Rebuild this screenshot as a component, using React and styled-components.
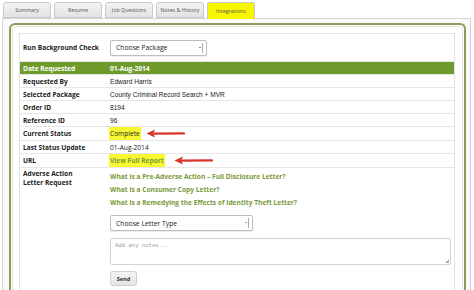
import styled, { createGlobalStyle } from 'styled-components'

const Global = createGlobalStyle`
  html, body { margin: 0; padding: 0; background: #fff; }
  body { font-family: "Open Sans", "Liberation Sans", sans-serif; color: #222; }
`

const Page = styled.div`
  width: 474px;
  height: 290px;
  overflow: hidden;
  padding: 2px 3px 0 2px;
  box-sizing: border-box;
`

const TabBar = styled.div`
  display: flex;
  gap: 3px;
  padding-left: 1px;
  height: 16px;
`

const Tab = styled.div`
  width: 48px;
  height: ${p => (p.$active ? '17px' : '16px')};
  box-sizing: border-box;
  border: 1px solid #c9c9c9;
  border-bottom: ${p => (p.$active ? 'none' : '1px solid #c9c9c9')};
  border-radius: 3px 3px 0 0;
  background: ${p => (p.$active ? '#f6f600' : 'linear-gradient(#f2f2f2, #e3e3e3)')};
  font-size: 5.3px;
  color: #555;
  display: flex;
  align-items: center;
  justify-content: center;
  position: relative;
  z-index: 1;
`

const Panel = styled.div`
  border: 1px solid #d3d3d3;
  border-bottom: none;
  padding: 4px 4px 0 6px;
  height: 280px;
  box-sizing: border-box;
  background: #fafafa;
`

const GreenBox = styled.div`
  border: 2px solid #8d9c5c;
  border-bottom: none;
  border-radius: 6px 6px 0 0;
  background: #fff;
  box-shadow: inset 0 0 0 1px #fff, inset 0 0 0 2px #e3e6d6;
  padding: 8px 9px 0 8px;
  height: 290px;
  box-sizing: border-box;
`

const Content = styled.div`
  border: 1px solid #e2e2e2;
  background: #fff;
`

const Row = styled.div`
  display: grid;
  grid-template-columns: 90px 1fr;
  align-items: ${p => (p.$top ? 'start' : 'center')};
  min-height: ${p => p.$h || 13}px;
  border-top: ${p => (p.$first ? 'none' : '1px solid #e6e6e6')};
  box-sizing: border-box;
  background: ${p => (p.$header ? '#6f9b2c' : '#fff')};
  color: ${p => (p.$header ? '#fff' : '#222')};
`

const Label = styled.div`
  font-weight: 700;
  font-size: 6.6px;
  line-height: 9px;
  padding-left: 3px;
  padding-top: ${p => p.$pt || 0}px;
`

const Value = styled.div`
  font-family: ${p => (p.$open ? '"Open Sans", sans-serif' : '"Liberation Sans", Arial, sans-serif')};
  font-size: 6.6px;
  font-weight: ${p => (p.$bold ? 700 : 400)};
  display: flex;
  align-items: center;
`

const Mark = styled.span`
  background: #f8f832;
  color: ${p => (p.$link ? '#7b9a3c' : '#222')};
  font-family: "Open Sans", sans-serif;
  font-weight: ${p => (p.$link ? 700 : 400)};
  padding: 2px 1px;
  margin-left: -1px;
`

const Arrow = styled.svg`
  margin-left: ${p => p.$gap}px;
  display: block;
`

const SelectBox = styled.div`
  width: ${p => p.$w}px;
  height: 16px;
  margin-top: ${p => p.$mt || 0}px;
  box-sizing: border-box;
  border: 1px solid #bdbdbd;
  border-radius: 2px;
  box-shadow: 0 1px 1px rgba(0,0,0,0.08);
  background: #fff;
  display: flex;
  align-items: center;
  justify-content: space-between;
  padding: 0 3px 0 5px;
  font-family: "Open Sans", sans-serif;
  font-size: 6.8px;
  color: #222;
`

const Caret = styled.span`
  width: 1px;
  height: 10px;
  border-right: 1px solid #aaa;
  position: relative;
  &::after {
    content: '';
    position: absolute;
    right: 1px;
    top: 4px;
    border: 1.5px solid transparent;
    border-top-color: #222;
  }
`

const Adverse = styled.div`
  display: flex;
  flex-direction: column;
  padding-top: 4px;
`

const Link = styled.div`
  font-family: "Open Sans", sans-serif;
  font-weight: 700;
  font-size: 6.65px;
  color: #7b9a3c;
  line-height: 9px;
  margin-bottom: 4px;
`

const Notes = styled.div`
  width: 341px;
  height: 27px;
  margin-top: 7px;
  box-sizing: border-box;
  border: 1px solid #d2d2d2;
  border-radius: 2px;
  padding: 3px 4px;
  font-family: "Liberation Mono", monospace;
  font-size: 5.6px;
  color: #999;
  position: relative;
  &::after {
    content: '';
    position: absolute;
    right: 1px;
    bottom: 1px;
    border: 2px solid transparent;
    border-right-color: #aaa;
    border-bottom-color: #aaa;
  }
`

const SendButton = styled.div`
  width: 27px;
  height: 15px;
  margin: 6px 0 4px;
  box-sizing: border-box;
  border: 1px solid #cfcfcf;
  border-radius: 3px;
  background: linear-gradient(#f4f4f4, #e4e4e4);
  font-size: 5.6px;
  font-weight: 700;
  color: #333;
  display: flex;
  align-items: center;
  justify-content: center;
`

function RedArrow({ gap, width }) {
  return (
    <Arrow $gap={gap} width={width} height="9" viewBox={`0 0 ${width} 9`}>
      <path d={`M${width - 1} 4.4 L7 4.6`} stroke="#d9342b" strokeWidth="2.2" strokeLinecap="round" />
      <path d="M0.5 4.5 L9 0.5 L7.2 4.5 L9 8.5 Z" fill="#d9342b" />
    </Arrow>
  )
}

const tabs = ['Summary', 'Resume', 'Job Questions', 'Notes & History', 'Integrations']

const rows = [
  ['Requested By', 'Edward Harris'],
  ['Selected Package', 'County Criminal Record Search + MVR'],
  ['Order ID', '8194'],
  ['Reference ID', '96'],
]

export default function App() {
  return (
    <>
      <Global />
      <Page>
        <TabBar>
          {tabs.map(t => (
            <Tab key={t} $active={t === 'Integrations'}>{t}</Tab>
          ))}
        </TabBar>
        <Panel>
          <GreenBox>
            <Content>
              <Row $first $h={27}>
                <Label>Run Background Check</Label>
                <Value>
                  <SelectBox $w={97}>Choose Package<Caret /></SelectBox>
                </Value>
              </Row>
              <Row $header $h={13}>
                <Label>Date Requested</Label>
                <Value $bold $open>01-Aug-2014</Value>
              </Row>
              {rows.map(([l, v]) => (
                <Row key={l}>
                  <Label>{l}</Label>
                  <Value>{v}</Value>
                </Row>
              ))}
              <Row>
                <Label>Current Status</Label>
                <Value>
                  <Mark>Complete</Mark>
                  <RedArrow gap={5} width={39} />
                </Value>
              </Row>
              <Row>
                <Label>Last Status Update</Label>
                <Value $open>01-Aug-2014</Value>
              </Row>
              <Row>
                <Label>URL</Label>
                <Value>
                  <Mark $link>View Full Report</Mark>
                  <RedArrow gap={9} width={39} />
                </Value>
              </Row>
              <Row $top>
                <Label $pt={1}>Adverse Action<br />Letter Request</Label>
                <Adverse>
                  <Link>What is a Pre-Adverse Action – Full Disclosure Letter?</Link>
                  <Link>What is a Consumer Copy Letter?</Link>
                  <Link>What is a Remedying the Effects of Identity Theft Letter?</Link>
                  <SelectBox $w={143} $mt={4}>Choose Letter Type<Caret /></SelectBox>
                  <Notes>Add any notes...</Notes>
                  <SendButton>Send</SendButton>
                </Adverse>
              </Row>
            </Content>
          </GreenBox>
        </Panel>
      </Page>
    </>
  )
}
